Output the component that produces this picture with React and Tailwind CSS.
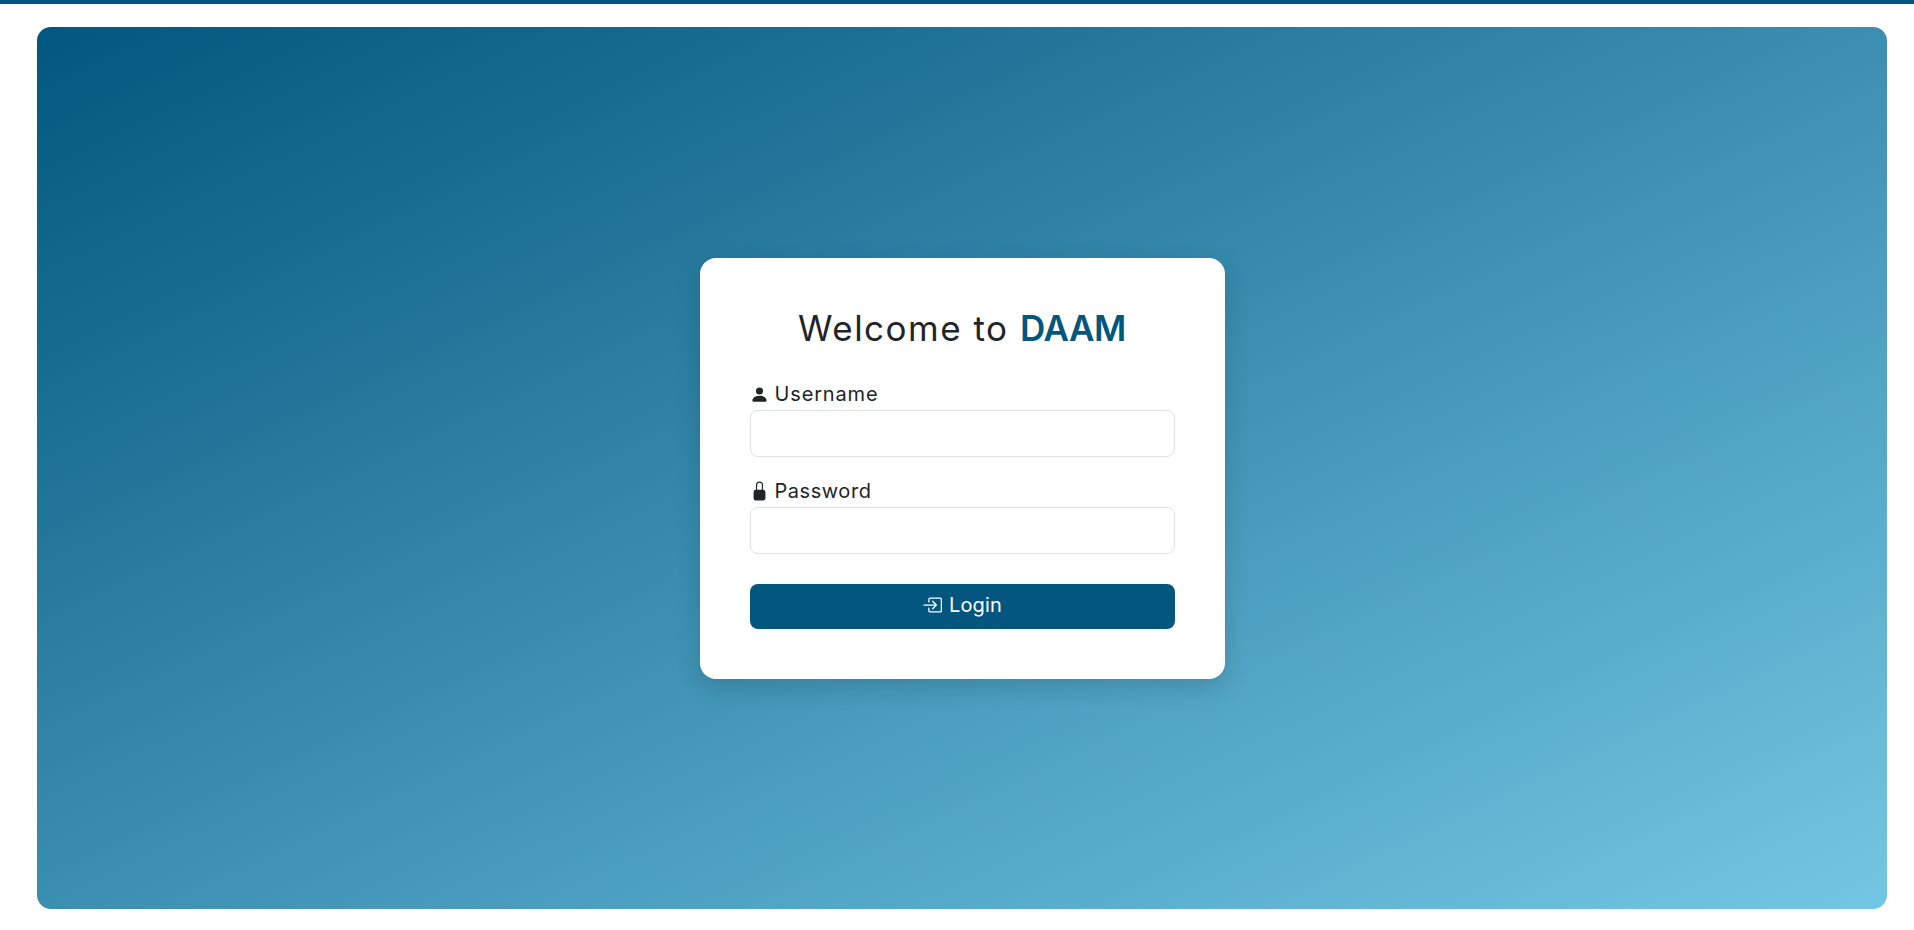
import React from "react";
import { BsPersonFill, BsLockFill, BsBoxArrowInRight } from "react-icons/bs";

function Field({ icon, label, className, labelClass }) {
  return (
    <div className={className}>
      <label className="flex h-[29px] items-center pb-[2px] text-[20px] leading-[24px] text-[#212529]">
        {icon}
        <span className={labelClass}>{label}</span>
      </label>
      <input className="block h-[47px] w-full rounded-[8px] border border-[#dee2e6] bg-white" />
    </div>
  );
}

export default function App() {
  return (
    <div className="min-h-[930px] bg-white font-['Inter',sans-serif]">
      <div className="h-[4px] bg-[#03567d]" />
      <div className="pt-[23px] pr-[27px] pl-[37px]">
        <main className="flex h-[882px] items-center justify-center rounded-[14px] bg-[linear-gradient(to_bottom_right,#03567d,#73c7e4)]">
          <section className="h-[421px] w-[525px] rounded-[16px] bg-white px-[50px] pt-[50px] shadow-[0_8px_24px_rgba(0,0,0,0.15)]">
            <h1 className="mb-[31px] h-[42px] text-center text-[35px] leading-[40px] font-normal tracking-[1.5px] text-[#212529]">
              Welcome to <span className="font-semibold tracking-[-0.4px] text-[#03567d]">DAAM</span>
            </h1>
            <Field className="mb-[21px]" labelClass="ml-[6px] tracking-[0.85px]" icon={<BsPersonFill className="h-[19px] w-[19px]" />} label="Username" />
            <Field className="mb-[30px]" labelClass="ml-[6px] tracking-[0.55px]" icon={<BsLockFill className="h-[20px] w-[19px]" />} label="Password" />
            <button className="flex h-[45px] w-full items-center justify-center rounded-[8px] bg-[#03567d] pb-[2px] text-[20px] tracking-[0.2px] text-white">
              <BsBoxArrowInRight className="mr-[7px] h-[20px] w-[20px]" />
              Login
            </button>
          </section>
        </main>
      </div>
    </div>
  );
}
